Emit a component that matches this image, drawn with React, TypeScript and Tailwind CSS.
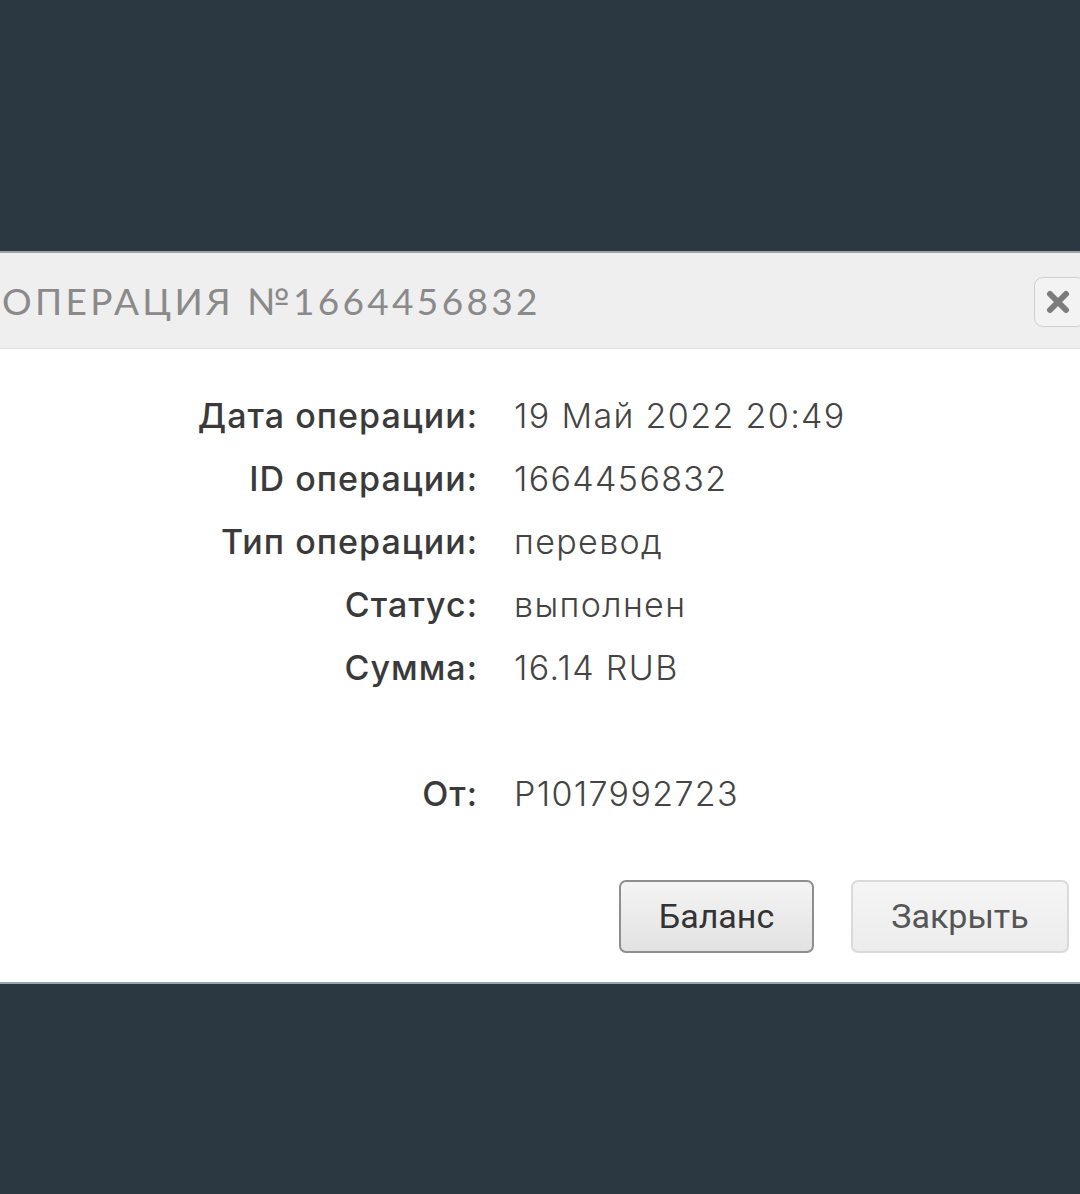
import React from 'react';

const rows: [string, string][] = [
  ['Дата операции:', '19 Май 2022 20:49'],
  ['ID операции:', '1664456832'],
  ['Тип операции:', 'перевод'],
  ['Статус:', 'выполнен'],
  ['Сумма:', '16.14 RUB'],
];

const App: React.FC = () => {
  return (
    <div className="h-[1194px] w-full overflow-hidden bg-[#2c3841] flex flex-col">
      <div className="h-[253px] shrink-0" />

      {/* Modal */}
      <div className="h-[729px] shrink-0 bg-white flex flex-col shadow-[0_-2px_0_#9aa4aa,0_2px_0_#9aa4aa]">
        {/* Header */}
        <div className="h-[96px] shrink-0 bg-[#efefef] border-b border-[#e2e2e2] flex items-center justify-between">
          <h1
            className="pl-[2px] text-[37px] tracking-[0.09em] text-[#8a8a8a] leading-none"
            style={{ fontFamily: '"Lato", "DejaVu Sans", sans-serif' }}
          >
            ОПЕРАЦИЯ №1664456832
          </h1>
          <button className="mr-[-6px] mb-[-3px] h-[50px] w-[52px] rounded-[9px] border border-[#cfcfcf] bg-[#f3f3f3] flex items-center justify-center">
            <svg width="24" height="24" viewBox="0 0 24 24" className="ml-[-4px]">
              <path d="M4 4 L20 20 M20 4 L4 20" stroke="#7c7c7c" strokeWidth="6" strokeLinecap="round" />
            </svg>
          </button>
        </div>

        {/* Body */}
        <div
          className="pt-[35px] grid grid-cols-[478px_1fr] gap-x-[36px] text-[34px] tracking-[0.03em]"
          style={{ fontFamily: '"Inter", "Noto Sans", sans-serif' }}
        >
          {rows.map(([label, value]) => (
            <React.Fragment key={label}>
              <div className="h-[63px] flex items-center justify-end font-medium text-[#3a3a3a]">
                {label}
              </div>
              <div className="h-[63px] flex items-center text-[#444] font-light tracking-[0.04em]">{value}</div>
            </React.Fragment>
          ))}
          <div className="h-[63px]" />
          <div className="h-[63px]" />
          <div className="h-[63px] flex items-center justify-end font-medium text-[#3a3a3a]">От:</div>
          <div className="h-[63px] flex items-center text-[#444] font-light tracking-[0.04em]">P1017992723</div>
        </div>

        {/* Buttons */}
        <div
          className="mt-[55px] flex justify-end gap-[37px] pr-[11px] text-[34px]"
          style={{ fontFamily: '"Roboto", "Liberation Sans", sans-serif' }}
        >
          <button className="h-[73px] w-[195px] rounded-[7px] border-2 border-[#8e8e8e] bg-gradient-to-b from-[#f4f4f4] to-[#e2e2e2] text-[#333]">
            Баланс
          </button>
          <button className="h-[73px] w-[218px] rounded-[7px] border-2 border-[#dadada] bg-gradient-to-b from-[#f5f5f5] to-[#ececec] text-[#555]">
            Закрыть
          </button>
        </div>
      </div>
    </div>
  );
};

export default App;
